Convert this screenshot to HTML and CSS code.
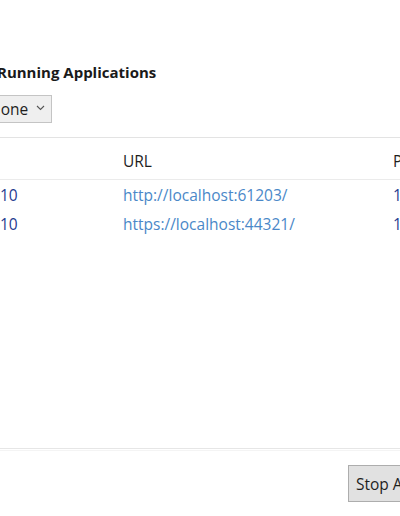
FILE: index.html
```html
<!DOCTYPE html>
<html>
<head>
<meta charset="utf-8">
<link rel="stylesheet" href="styles.css">
</head>
<body>
<div class="dialog">
  <div class="top">
    <h1 class="title">Running Applications</h1>
    <div class="select">
      <span class="select-text">None</span>
      <svg class="chev" width="9" height="6" viewBox="0 0 9 6"><path d="M1 1 L4.5 4.5 L8 1" fill="none" stroke="#555" stroke-width="1.1"/></svg>
    </div>
  </div>
  <div class="table">
    <div class="row head">
      <div class="c1"></div>
      <div class="c2">URL</div>
      <div class="c3">P</div>
    </div>
    <div class="row">
      <div class="c1 num">10</div>
      <div class="c2 link">http://localhost:61203/</div>
      <div class="c3 num">1</div>
    </div>
    <div class="row">
      <div class="c1 num">10</div>
      <div class="c2 link">https://localhost:44321/</div>
      <div class="c3 num">1</div>
    </div>
  </div>
  <div class="footer">
    <button class="btn">Stop Applications</button>
  </div>
</div>
</body>
</html>
```
FILE: styles.css
```css
html, body {
  margin: 0;
  padding: 0;
  background: #ffffff;
}
body {
  width: 400px;
  height: 516px;
  overflow: hidden;
  font-family: "Open Sans", "Noto Sans", sans-serif;
  color: #1e1e1e;
}
.dialog {
  height: 516px;
  display: flex;
  flex-direction: column;
}
.top {
  padding-top: 61px;
  margin-left: -14px;
  display: flex;
  flex-direction: column;
  align-items: flex-start;
}
.title {
  margin: 0 0 0 11px;
  font-size: 15px;
  font-weight: 700;
  line-height: 22px;
  color: #1a1a1a;
}
.select {
  margin-top: 12px;
  height: 26px;
  width: 64px;
  border: 1px solid #c4c4c4;
  background: #efefef;
  display: flex;
  align-items: center;
  box-sizing: content-box;
}
.select-text {
  font-size: 15.5px;
  line-height: 20px;
  margin-left: 2px;
  color: #1e1e1e;
}
.chev {
  margin-left: 8px;
  margin-top: -2px;
}
.table {
  margin-top: 14px;
  border-top: 1px solid #e3e3e3;
}
.row {
  display: flex;
  height: 29px;
  align-items: center;
  font-size: 15.5px;
  line-height: 20px;
}
.row.head {
  height: 42px;
  padding-top: 5px;
  box-sizing: border-box;
  border-bottom: 1px solid #ebebeb;
  color: #1e1e1e;
}
.c1 { width: 123px; flex: none; }
.c2 { width: 270px; flex: none; }
.c3 { flex: none; }
.num { color: #1f3b8f; }
.link { color: #4a88c8; }
.footer {
  margin-top: auto;
  border-top: 1px solid #e6e6e6;
  height: 68px;
  display: flex;
  padding-top: 16px;
  box-sizing: border-box;
  position: relative;
}
.footer::before {
  content: "";
  position: absolute;
  left: 0;
  right: 0;
  top: 1px;
  height: 1px;
  background: #f4f4f4;
}
.btn {
  margin-left: 348px;
  height: 37px;
  min-width: 130px;
  flex: none;
  border: 1px solid #adadad;
  background: #e1e1e1;
  font-family: "Open Sans", "Noto Sans", sans-serif;
  font-size: 15.5px;
  color: #1e1e1e;
  padding: 0 0 0 7px;
  text-align: left;
  white-space: nowrap;
}
```
